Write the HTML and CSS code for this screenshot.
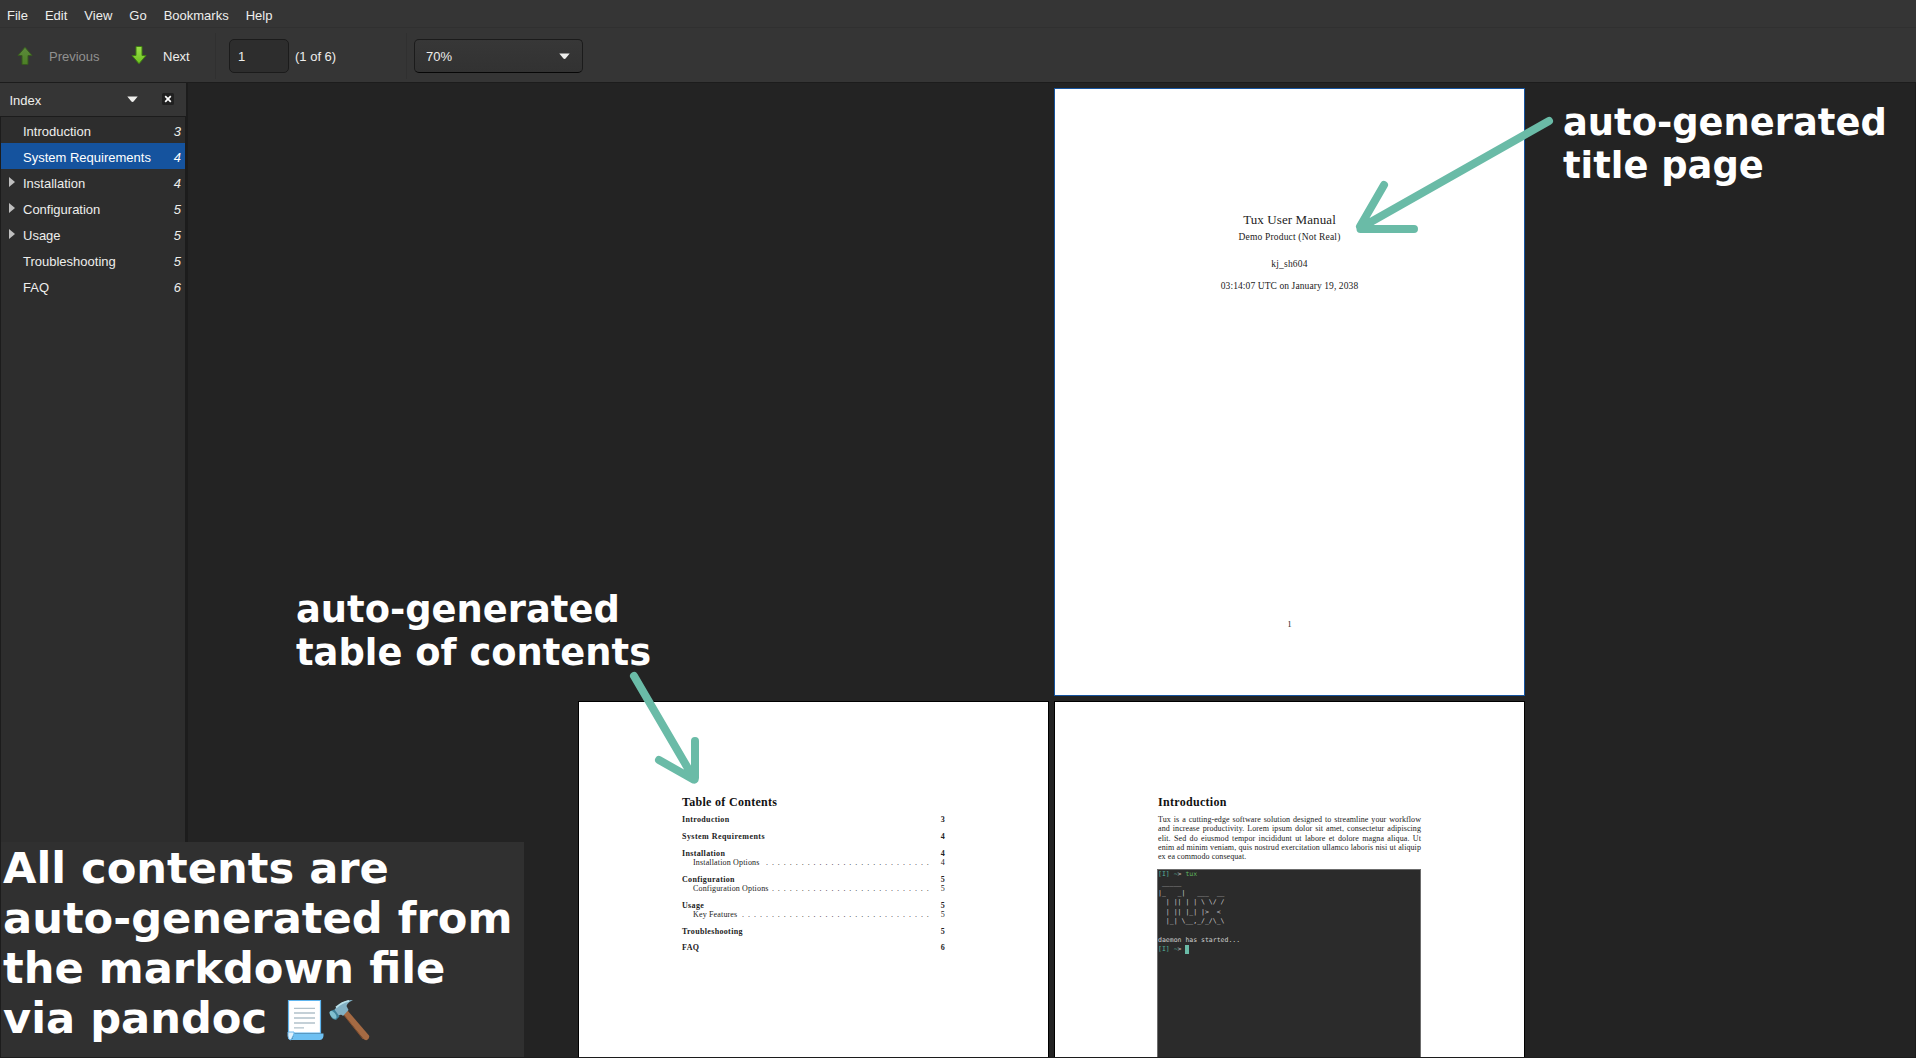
FILE: index.html
```html
<!DOCTYPE html>
<html lang="en">
<head>
<meta charset="utf-8">
<title>Tux User Manual</title>
<link rel="stylesheet" href="styles.css">
</head>
<body>
<div class="window">
  <nav class="menubar">
    <span>File</span><span>Edit</span><span>View</span><span>Go</span><span>Bookmarks</span><span>Help</span>
  </nav>

  <div class="toolbar">
    <div class="tool tool-prev">
      <svg class="arrow" width="16" height="20" viewBox="0 0 16 20"><defs><linearGradient id="g1" x1="0" y1="0" x2="0" y2="1"><stop offset="0" stop-color="#5c8a3c"/><stop offset="1" stop-color="#4c7f25"/></linearGradient></defs><path d="M8 1.2 L15 9.5 H11 V18.5 H5 V9.5 H1 Z" fill="url(#g1)" stroke="#37591f" stroke-width="1"/></svg>
      <span>Previous</span>
    </div>
    <div class="tool tool-next">
      <svg class="arrow" width="16" height="20" viewBox="0 0 16 20"><defs><linearGradient id="g2" x1="0" y1="0" x2="0" y2="1"><stop offset="0" stop-color="#9be04a"/><stop offset="1" stop-color="#6cc01f"/></linearGradient></defs><path d="M8 17.8 L15 9.5 H11 V.5 H5 V9.5 H1 Z" fill="url(#g2)" stroke="#3f7d12" stroke-width="1"/></svg>
      <span>Next</span>
    </div>
    <i class="separator"></i>
    <div class="page-entry">1</div>
    <span class="page-total">(1 of 6)</span>
    <i class="separator"></i>
    <div class="zoom-combo"><span>70%</span><svg width="11" height="7" viewBox="0 0 11 7"><path d="M.3 .5 H10.7 L7 5 Q5.5 7 4 5 Z" fill="#eeeeec"/></svg></div>
  </div>

  <div class="content">
    <aside class="sidebar">
      <header class="side-head">
        <span>Index</span>
        <svg class="side-drop" width="11" height="7" viewBox="0 0 11 7"><path d="M.3 .5 H10.7 L7 5 Q5.5 7 4 5 Z" fill="#eeeeec"/></svg>
        <svg class="side-close" width="12" height="12" viewBox="0 0 12 12"><rect width="12" height="12" rx="1.5" fill="#202020"/><path d="M3.2 3.2 L8.8 8.8 M8.8 3.2 L3.2 8.8" stroke="#fff" stroke-width="1.7"/></svg>
      </header>
      <ul class="index">
        <li><b></b><span>Introduction</span><em>3</em></li>
        <li class="selected"><b></b><span>System Requirements</span><em>4</em></li>
        <li class="parent"><b></b><span>Installation</span><em>4</em></li>
        <li class="parent"><b></b><span>Configuration</span><em>5</em></li>
        <li class="parent"><b></b><span>Usage</span><em>5</em></li>
        <li><b></b><span>Troubleshooting</span><em>5</em></li>
        <li><b></b><span>FAQ</span><em>6</em></li>
      </ul>
    </aside>

    <main class="viewer">
      <section class="page title-page">
        <h1>Tux User Manual</h1>
        <p class="subtitle">Demo Product (Not Real)</p>
        <p class="author">kj_sh604</p>
        <p class="date">03:14:07 UTC on January 19, 2038</p>
        <p class="folio">1</p>
      </section>

      <section class="page toc-page">
        <h2>Table of Contents</h2>
        <div class="chapter"><span class="w-intro">Introduction</span><span>3</span></div>
        <div class="chapter"><span class="w-sys">System Requirements</span><span>4</span></div>
        <div class="chapter"><span>Installation</span><span>4</span></div>
        <div class="section"><span>Installation Options</span><i class="dots">. . . . . . . . . . . . . . . . . . . . . . . . . . . .</i><span>4</span></div>
        <div class="chapter"><span>Configuration</span><span>5</span></div>
        <div class="section"><span>Configuration Options</span><i class="dots">. . . . . . . . . . . . . . . . . . . . . . . . . . .</i><span>5</span></div>
        <div class="chapter"><span>Usage</span><span>5</span></div>
        <div class="section"><span>Key Features</span><i class="dots">. . . . . . . . . . . . . . . . . . . . . . . . . . . . . . . .</i><span>5</span></div>
        <div class="chapter"><span>Troubleshooting</span><span>5</span></div>
        <div class="chapter"><span>FAQ</span><span>6</span></div>
      </section>

      <section class="page intro-page">
        <h2>Introduction</h2>
        <div class="para">
          <p>Tux is a cutting-edge software solution designed to streamline your workflow</p>
          <p>and increase productivity. Lorem ipsum dolor sit amet, consectetur adipiscing</p>
          <p>elit. Sed do eiusmod tempor incididunt ut labore et dolore magna aliqua. Ut</p>
          <p>enim ad minim veniam, quis nostrud exercitation ullamco laboris nisi ut aliquip</p>
          <p class="last">ex ea commodo consequat.</p>
        </div>
        <pre class="terminal"><span class="teal">[I]</span> <span class="teal">~</span>&gt; <span class="green">tux</span>
 _____
|_   _|   ___  __
  | || | | \ \/ /
  | || |_| |&gt;  &lt;
  |_| \__,_/_/\_\

daemon has started...
<span class="teal">[I]</span> <span class="teal">~</span>&gt; <span class="cursor"> </span></pre>
      </section>
    </main>
  </div>

  <p class="note note-title">auto-generated<br>title page</p>
  <p class="note note-toc">auto-generated<br>table of contents</p>
  <svg class="strokes" width="1916" height="1058" viewBox="0 0 1916 1058" fill="none" stroke="#6abba7" stroke-width="8" stroke-linecap="round" stroke-linejoin="round">
    <path d="M1549 121 L1361 227.500 M1384 185 L1360 226.500 M1360.500 229 H1414"/>
    <path d="M634 676 L694.5 779.5 M695 741 V778 L693.5 779.5 L659 760"/>
  </svg>
  <div class="caption">All contents are<br>auto-generated from<br>the markdown file<br>via pandoc <svg width="86" height="42" viewBox="0 0 86 42">
    <path d="M2.5 1.5 H34.5 V34 H2.5 Z" fill="#fff" stroke="#5fb6f0" stroke-width="1.2"/>
    <path d="M2 33 V37 Q2 41 5 41 L8 35 V33 Z" fill="#dff1fc" stroke="#6cb9ee" stroke-width="1"/>
    <path d="M7.5 34.5 H37.5 Q38 41 34 41 H5 Q7.5 39.5 7.5 34.5 Z" fill="#6ec0f2"/>
    <path d="M8 9.3 H29 M8 14 H29 M8 19 H29 M8 24 H29 M8 28.8 H18" stroke="#b1c1ca" stroke-width="1.3"/>
    <path d="M57.5 15.5 L61.5 11.5 L83 36.5 Q84 39 81 41 Q79 41.5 77.5 40 Z" fill="#a56a43"/>
    <path d="M77 40 L57.5 15.5" stroke="#87512f" stroke-width="1"/>
    <path d="M47.5 12 Q51 6.5 58 3 Q63 0 67 1.3 Q62 3 60.5 7 L62.5 11 L57 17 Q55 14.5 52.5 17 Z" fill="#82b1c4"/>
    <path d="M50 8.5 Q56 3 63 1.8" stroke="#b9e1ea" stroke-width="1.8" fill="none"/>
    <path d="M45.5 11.5 L48.5 10.5 L53.5 17.5 L50 21 Q45 20.5 44 15 Z" fill="#3f8199"/>
    <ellipse cx="47" cy="15.8" rx="2.4" ry="4.6" transform="rotate(-38 47 15.8)" fill="#80c0d0"/>
  </svg></div>
</div>
</body>
</html>
```
FILE: styles.css
```css
* { box-sizing: border-box; }
body { margin: 0; background: #232323; }
h1, h2, p, ul, pre { margin: 0; padding: 0; font-weight: normal; }

.window {
  position: relative;
  width: 1916px;
  height: 1058px;
  display: flex;
  flex-direction: column;
  overflow: hidden;
  background: #353535;
  color: #eeeeec;
  font: 13px/16px "Liberation Sans", Arial, sans-serif;
}

/* Menu and toolbar */
.menubar {
  height: 28px;
  display: flex;
  gap: 17px;
  padding: 8px 7px 0;
  border-bottom: 1px solid #303030;
}
.toolbar {
  height: 55px;
  display: flex;
  align-items: center;
  padding: 2px 0 0 17px;
  border-bottom: 1px solid #1c1c1c;
}
.tool { display: flex; align-items: center; gap: 16px; }
.tool span { padding-top: 1px; }
.tool-prev { width: 114px; color: #919190; }
.tool-next { width: 84px; }
.separator { width: 1px; height: 46px; background: #303030; }
.page-entry {
  width: 60px;
  height: 34px;
  margin-left: 13px;
  padding: 9px 8px;
  border: 1px solid #1b1b1b;
  border-radius: 5px;
  background: #2d2d2d;
}
.page-total { width: 117px; padding: 1px 0 0 6px; }
.zoom-combo {
  width: 169px;
  height: 34px;
  margin-left: 7px;
  padding: 1px 12px 0 11px;
  display: flex;
  align-items: center;
  justify-content: space-between;
  border: 1px solid #1b1b1b;
  border-bottom-color: #070707;
  border-radius: 5px;
  background: linear-gradient(#373737, #323232);
}

/* Index pane */
.content { flex: 1; display: flex; min-height: 0; }
.sidebar {
  width: 188px;
  display: flex;
  flex-direction: column;
  border-right: 2px solid #1c1c1c;
}
.side-head {
  height: 33px;
  display: flex;
  align-items: center;
  padding-left: 9.5px;
}
.side-head span { width: 117.5px; padding-top: 2px; }
.side-close { margin: -1px 0 0 24px; }
.index {
  flex: 1;
  list-style: none;
  border: 1px solid #1c1c1c;
  background: #2d2d2d;
}
.index li {
  height: 26px;
  display: flex;
  align-items: center;
  padding: 0 4px 0 8px;
}
.index li b { width: 14px; height: 10px; }
.index li span { flex: 1; }
.index li span, .index li em { padding-top: 3px; }
.parent b::before {
  content: "";
  display: block;
  width: 6px;
  height: 10px;
  background: #bfbfbf;
  clip-path: polygon(0 0, 100% 50%, 0 100%);
}
.index .selected { background: #15539e; color: #fff; }

/* Document pages */
.viewer {
  flex: 1;
  display: grid;
  grid-template-columns: 471px 471px;
  grid-template-rows: 608px 608px;
  gap: 5px;
  justify-content: center;
  padding-top: 5px;
  border-right: 1px solid #1c1c1c;
  border-bottom: 1px solid #1c1c1c;
  background: #232323;
  overflow: hidden;
}
.page {
  padding: 92px 103px 0;
  border: 1px solid #000;
  background: #fff;
  color: #222;
  font: 8px/9.28px "Liberation Serif", "Times New Roman", serif;
}
.title-page {
  grid-column: 2;
  padding: 122.5px 0 0;
  border-color: #15539e;
  text-align: center;
}
.title-page h1 { font-size: 13px; line-height: 16px; letter-spacing: .1px; }
.title-page p { font-size: 9.5px; line-height: 14px; letter-spacing: .18px; }
.title-page .subtitle { margin: 2.5px 0 13px; }
.title-page .author { margin-bottom: 8.2px; }
.title-page .date { letter-spacing: .09px; }
.title-page .folio { margin-top: 326.6px; color: #111; font-size: 8px; line-height: 10px; }

.page h2 {
  margin-bottom: 5.2px;
  color: #111;
  font-size: 12px;
  font-weight: bold;
  line-height: 16px;
  letter-spacing: .3px;
}
.chapter, .section { display: flex; justify-content: space-between; }
.chapter { font-weight: bold; letter-spacing: .34px; margin-bottom: 7.45px; }
.chapter:has(+ .section) { margin-bottom: 0; }
.chapter .w-sys { letter-spacing: .46px; }
.section { margin-bottom: 7.45px; padding-left: 11px; letter-spacing: .16px; }
.dots {
  flex: 1;
  margin-right: 11px;
  font-style: normal;
  text-align: right;
  white-space: nowrap;
  letter-spacing: .98px;
}

.para p { text-align: justify; text-align-last: justify; letter-spacing: .08px; white-space: nowrap; }
.para .last { text-align-last: left; letter-spacing: .07px; }
.terminal {
  width: 264px;
  height: 300px;
  margin: 7.2px 0 0 -1px;
  border: 1px solid #6c6c6c;
  background: #2b2b2b;
  color: #d0d0d0;
  font: 6.5px/9.45px "DejaVu Sans Mono", monospace;
}
.teal { color: #56b39b; }
.green { color: #5fb860; }
.cursor { background: #6abba7; display: inline-block; height: 9px; vertical-align: top; }

/* Annotations drawn over the window */
.note, .caption {
  position: absolute;
  color: #fff;
  font-family: "DejaVu Sans", sans-serif;
  font-weight: bold;
  white-space: nowrap;
}
.note { font-size: 36.85px; line-height: 43px; }
.note-title { left: 1563px; top: 101px; }
.note-toc { left: 296px; top: 588px; }
.strokes { position: absolute; left: 0; top: 0; }
.caption {
  left: 1px;
  top: 842px;
  width: 523px;
  height: 215px;
  padding: 1px 2px;
  background: #303030;
  font-size: 43.2px;
  line-height: 50px;
}
.caption svg { vertical-align: -8px; margin-left: 4px; }
```
